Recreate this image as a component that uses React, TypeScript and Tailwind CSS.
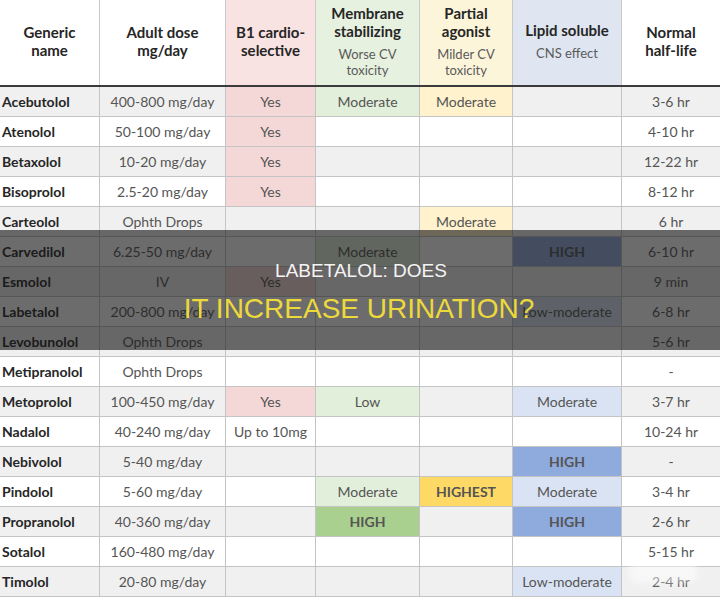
type Tone = "pink" | "greenLt" | "green" | "yellowLt" | "yellow" | "blueLt" | "blue";
type Cell = string | [string, Tone];

const tones: Record<Tone, string> = {
  pink: "bg-[#f4d8d8]",
  greenLt: "bg-[#e2efda]",
  green: "bg-[#a9d08e] font-bold text-[#1d2a18]",
  yellowLt: "bg-[#fff2cc]",
  yellow: "bg-[#ffd966] font-bold text-[#2b2410]",
  blueLt: "bg-[#dae3f3]",
  blue: "bg-[#8faadc] font-bold text-[#1b2540]",
};

const rows: Cell[][] = [
  ["Acebutolol", "400-800 mg/day", ["Yes", "pink"], ["Moderate", "greenLt"], ["Moderate", "yellowLt"], "", "3-6 hr"],
  ["Atenolol", "50-100 mg/day", ["Yes", "pink"], "", "", "", "4-10 hr"],
  ["Betaxolol", "10-20 mg/day", ["Yes", "pink"], "", "", "", "12-22 hr"],
  ["Bisoprolol", "2.5-20 mg/day", ["Yes", "pink"], "", "", "", "8-12 hr"],
  ["Carteolol", "Ophth Drops", "", "", ["Moderate", "yellowLt"], "", "6 hr"],
  ["Carvedilol", "6.25-50 mg/day", "", ["Moderate", "greenLt"], "", ["HIGH", "blue"], "6-10 hr"],
  ["Esmolol", "IV", ["Yes", "pink"], "", "", "", "9 min"],
  ["Labetalol", "200-800 mg/day", "", "", "", ["Low-moderate", "blueLt"], "6-8 hr"],
  ["Levobunolol", "Ophth Drops", "", "", "", "", "5-6 hr"],
  ["Metipranolol", "Ophth Drops", "", "", "", "", "-"],
  ["Metoprolol", "100-450 mg/day", ["Yes", "pink"], ["Low", "greenLt"], "", ["Moderate", "blueLt"], "3-7 hr"],
  ["Nadalol", "40-240 mg/day", "Up to 10mg", "", "", "", "10-24 hr"],
  ["Nebivolol", "5-40 mg/day", "", "", "", ["HIGH", "blue"], "-"],
  ["Pindolol", "5-60 mg/day", "", ["Moderate", "greenLt"], ["HIGHEST", "yellow"], ["Moderate", "blueLt"], "3-4 hr"],
  ["Propranolol", "40-360 mg/day", "", ["HIGH", "green"], "", ["HIGH", "blue"], "2-6 hr"],
  ["Sotalol", "160-480 mg/day", "", "", "", "", "5-15 hr"],
  ["Timolol", "20-80 mg/day", "", "", "", ["Low-moderate", "blueLt"], "2-4 hr"],
];

const grid = "grid grid-cols-[100px_126px_90px_104px_93px_109px_98px]";

const HeadCell = ({ title, sub, bg, last }: { title: string[]; sub?: string[]; bg: string; last?: boolean }) => (
  <div className={`flex flex-col items-center justify-center pb-1 text-center ${bg} ${last ? "" : "border-r border-[#c9c9c9]"}`}>
    {title.map((t) => (
      <div key={t} className="text-[15px] leading-[18px] font-bold text-[#262626]">{t}</div>
    ))}
    {sub && (
      <div className="mt-[6px]">
        {sub.map((s) => (
          <div key={s} className="text-[13px] leading-[16px] text-[#5a5a5a]">{s}</div>
        ))}
      </div>
    )}
  </div>
);

export default function App() {
  return (
    <div className="relative w-[720px] h-[597px] overflow-hidden bg-white font-['Lato','Open_Sans',sans-serif]">
      <div className={`${grid} h-[87px] border-b-2 border-[#3b3b3b]`}>
        <HeadCell title={["Generic", "name"]} bg="bg-white" />
        <HeadCell title={["Adult dose", "mg/day"]} bg="bg-white" />
        <HeadCell title={["B1 cardio-", "selective"]} bg="bg-[#f9e2e2]" />
        <HeadCell title={["Membrane", "stabilizing"]} sub={["Worse CV", "toxicity"]} bg="bg-[#e6f1df]" />
        <HeadCell title={["Partial", "agonist"]} sub={["Milder CV", "toxicity"]} bg="bg-[#fdf5d9]" />
        <HeadCell title={["Lipid soluble"]} sub={["CNS effect"]} bg="bg-[#dfe6f2]" />
        <HeadCell title={["Normal", "half-life"]} bg="bg-white" last />
      </div>

      {rows.map((row, i) => (
        <div key={i} className={`${grid} h-[30px] border-b border-[#c4c4c4] ${i % 2 === 0 ? "bg-[#f0f0f0]" : "bg-white"}`}>
          {row.map((cell, j) => {
            const text = typeof cell === "string" ? cell : cell[0];
            const tone = typeof cell === "string" ? "" : tones[cell[1]];
            if (j === 0) {
              return (
                <div key={j} className="flex items-center pl-[2px] border-r border-[#c4c4c4] text-[14px] font-bold text-[#262626]">
                  {text}
                </div>
              );
            }
            return (
              <div
                key={j}
                className={`flex items-center justify-center text-[14px] text-[#555555] ${tone} ${j < 6 ? "border-r border-[#c4c4c4]" : ""}`}
              >
                {text}
              </div>
            );
          })}
        </div>
      ))}

      {/* title band over the table */}
      <div className="absolute left-0 top-[230px] w-full h-[120px] bg-[rgba(22,22,22,0.63)] flex flex-col items-center justify-center pr-[2px] font-['Liberation_Sans',Arial,sans-serif] uppercase">
        <div className="text-[19px] leading-[38px] text-[#f4f4f4] pl-[4px]">Labetalol: Does</div>
        <div className="text-[28px] leading-[38px] text-[#ecd93c]">It Increase Urination?</div>
      </div>

      <div className="absolute right-[22px] bottom-[14px] w-[70px] h-[22px] rounded-full bg-white/50 blur-[3px]" />
    </div>
  );
}
